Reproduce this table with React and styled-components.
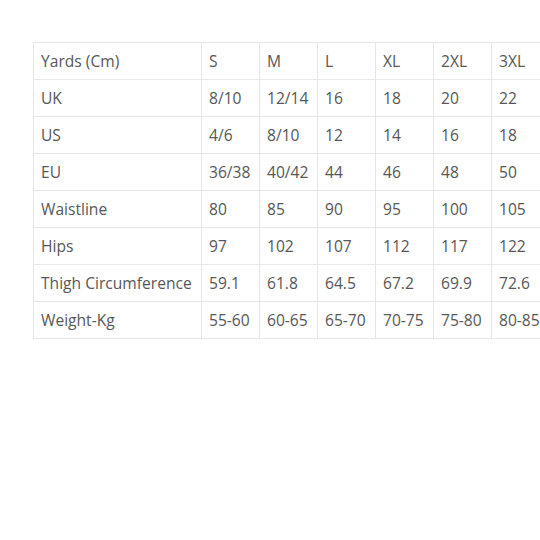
import React from "react";
import styled, { createGlobalStyle } from "styled-components";

const Global = createGlobalStyle`
  html, body { margin: 0; padding: 0; background: #fff; overflow: hidden; }
  body { font-family: "Open Sans", "Liberation Sans", sans-serif; }
`;

const Page = styled.div`
  width: 540px;
  height: 540px;
  padding: 42px 0 0 33px;
  box-sizing: border-box;
  overflow: hidden;
`;

const Table = styled.table`
  border-collapse: collapse;
  table-layout: fixed;
  width: ${168 + 58 * 6}px;
`;

const Col = styled.col`
  width: ${(p) => p.$w}px;
`;

const Row = styled.tr`
  height: 37px;
`;

const Cell = styled.td`
  border: 1px solid #e6e6e6;
  padding: 0 0 0 7px;
  font-size: 15.6px;
  color: #575757;
  white-space: nowrap;
  vertical-align: middle;
  overflow: hidden;
`;

const rows = [
  ["Yards (Cm)", "S", "M", "L", "XL", "2XL", "3XL"],
  ["UK", "8/10", "12/14", "16", "18", "20", "22"],
  ["US", "4/6", "8/10", "12", "14", "16", "18"],
  ["EU", "36/38", "40/42", "44", "46", "48", "50"],
  ["Waistline", "80", "85", "90", "95", "100", "105"],
  ["Hips", "97", "102", "107", "112", "117", "122"],
  ["Thigh Circumference", "59.1", "61.8", "64.5", "67.2", "69.9", "72.6"],
  ["Weight-Kg", "55-60", "60-65", "65-70", "70-75", "75-80", "80-85"],
];

export default function App() {
  return (
    <>
      <Global />
      <Page>
        <Table>
          <colgroup>
            <Col $w={168} />
            {[0, 1, 2, 3, 4, 5].map((i) => (
              <Col key={i} $w={58} />
            ))}
          </colgroup>
          <tbody>
            {rows.map((r, i) => (
              <Row key={i}>
                {r.map((c, j) => (
                  <Cell key={j}>{c}</Cell>
                ))}
              </Row>
            ))}
          </tbody>
        </Table>
      </Page>
    </>
  );
}
